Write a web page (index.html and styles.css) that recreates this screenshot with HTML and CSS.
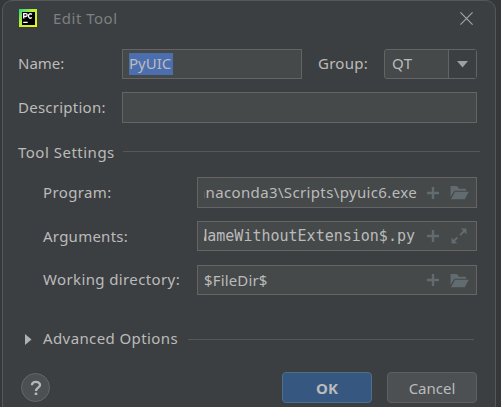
FILE: index.html
```
<!DOCTYPE html>
<html lang="en">
<head>
<meta charset="utf-8">
<title>Edit Tool</title>
<link rel="stylesheet" href="styles.css">
</head>
<body>
<svg class="defs" width="0" height="0">
  <symbol id="plus" viewBox="0 0 14 14"><path d="M5.8 1h2.4v4.8H13v2.4H8.2V13H5.8V8.2H1V5.8h4.8z"/></symbol>
  <symbol id="folder" viewBox="0 0 19 15"><path d="M0.5 1h6.5l2 2.7h7v2.1H4.3L0.5 12z"/><path d="M5 6.8h13.8l-4.1 7.4H0.9z"/></symbol>
  <symbol id="expand" viewBox="0 0 16 16"><path d="M9.7 0.5h5.8v5.8l-2.1-2.1-3.6 3.6-1.4-1.4L12 2.8zM6.3 15.5H.5V9.7l2.1 2.1 3-3L7 10.2l-3 3z"/></symbol>
</svg>
<main class="dialog">
  <header class="titlebar">
    <svg class="logo" viewBox="0 0 18 18">
      <defs><linearGradient id="g" x1="0" y1="0" x2="1" y2="1"><stop offset="0" stop-color="#21d789"/><stop offset=".4" stop-color="#b4ee3c"/><stop offset="1" stop-color="#f4f01c"/></linearGradient></defs>
      <path fill="url(#g)" d="M0 0h18v18H0z"/><path d="M3 3h13v13H3z"/>
      <path fill="none" stroke="#fff" stroke-width="1.3" d="M4.7 9.5V4.7h2.1c1.9 0 1.9 2.8 0 2.8H5M12.9 5.4c-1.4-1.3-3.4-.4-3.4 1.6s2 2.9 3.4 1.6M4.2 13.4h4.5"/>
    </svg>
    <h1 class="title">Edit Tool</h1>
    <svg class="close" viewBox="0 0 12 12"><path d="M.4.4l11.2 11.2M11.6.4L.4 11.6"/></svg>
  </header>
  <section class="general">
    <label class="label">Name:</label>
    <div class="name-row">
      <div class="field name"><span class="selected">PyUIC</span></div>
      <label class="label group">Group:</label>
      <div class="combo"><span class="combo-text">QT</span><span class="arrow"><svg viewBox="0 0 11 7"><path d="M0 0h11L5.5 6.5z"/></svg></span></div>
    </div>
    <label class="label desc">Description:</label>
    <div class="field tall"></div>
  </section>
  <div class="heading tool"><span class="tool-text">Tool Settings</span><i class="rule"></i></div>
  <section class="settings">
    <label class="label wide">Program:</label>
    <div class="field tall"><div class="clip"><span class="program">anaconda3\Scripts\pyuic6.exe</span></div><svg class="plus"><use href="#plus"/></svg><svg class="folder"><use href="#folder"/></svg></div>
    <label class="label desc">Arguments:</label>
    <div class="field"><div class="clip"><span class="args">NameWithoutExtension$.py</span></div><svg class="plus"><use href="#plus"/></svg><svg class="expand"><use href="#expand"/></svg></div>
    <label class="label wide">Working directory:</label>
    <div class="field"><div class="clip start"><span class="dir">$FileDir$</span></div><svg class="plus"><use href="#plus"/></svg><svg class="folder"><use href="#folder"/></svg></div>
  </section>
  <div class="heading advanced"><svg class="disclosure" viewBox="0 0 7 11"><path d="M0 0l6.5 5.5L0 11z"/></svg><span class="advanced-text">Advanced Options</span><i class="rule"></i></div>
  <footer class="footer">
    <button class="help"><svg viewBox="0 0 12 16"><path fill="none" stroke="#b5b8ba" stroke-width="2.4" d="M2 5.2C2 .8 10 .8 10 5 10 7.7 6 7.7 6 11"/><path fill="#b5b8ba" d="M4.7 12.6h2.6V15H4.7z"/></svg></button>
    <button class="button ok">OK</button>
    <button class="button cancel">Cancel</button>
  </footer>
</main>
</body>
</html>
```
FILE: styles.css
```
* { box-sizing: border-box; }
body {
  margin: 0;
  height: 407px;
  overflow: hidden;
  background: #35383a;
  color: #bbbbbb;
  font: 15px/20px "Noto Sans", sans-serif;
}
svg { display: block; flex: none; }
.defs { position: absolute; }
.dialog {
  width: 494px;
  height: 410px;
  margin-left: 2px;
  border: 1px solid #55585a;
  border-radius: 10px 10px 0 0;
  background: #3c3f41;
  white-space: nowrap;
}
.titlebar { display: flex; align-items: center; height: 34px; padding: 0 22px 0 16px; }
.logo { width: 18px; height: 18px; }
.title { margin: 0 auto 0 16px; color: #7d8082; font-size: 15px; font-weight: 400; letter-spacing: 0.5px; }
.close { width: 13px; height: 13px; stroke: #a1a4a6; stroke-width: 1.1; }
.general {
  display: grid;
  grid-template-columns: 104px 355px;
  grid-template-rows: 30px 31px;
  row-gap: 13px;
  align-items: center;
  margin: 14px 0 0 15px;
}
.label { padding-bottom: 2px; }
.name-row { display: flex; align-items: center; }
.field {
  display: flex;
  align-items: center;
  align-self: start;
  height: 30px;
  border: 1px solid #646464;
  background: #45494a;
}
.tall { height: 31px; }
.name { width: 180px; padding-left: 6px; }
.selected { height: 22px; line-height: 21px; width: 44px; background: #4b6eaf; }
.group { margin: 0 auto 0 16px; letter-spacing: 0.25px; }
.desc { letter-spacing: 0.25px; }
.wide { letter-spacing: 0.38px; }
.combo {
  display: flex;
  width: 93px;
  height: 30px;
  border: 1px solid #646464;
  border-radius: 3px;
  background: #45494a;
}
.combo-text { flex: 1; padding-left: 7px; line-height: 27px; letter-spacing: 0.5px; }
.arrow {
  display: flex;
  align-items: center;
  justify-content: center;
  width: 28px;
  border-left: 1px solid #646464;
  background: #3c3f41;
  fill: #9da0a2;
}
.arrow svg { width: 11px; height: 7px; }
.heading { display: flex; align-items: center; height: 20px; }
.rule { flex: 1; height: 1px; background: #555859; }
.tool { margin: 20px 15px 0 15px; }
.tool-text { padding-bottom: 2px; letter-spacing: 0.5px; }
.tool .rule { margin: 0 0 3px 8px; }
.settings {
  display: grid;
  grid-template-columns: 154px 280px;
  grid-template-rows: 31px 31px 30px;
  row-gap: 13px;
  align-items: center;
  margin: 14px 0 0 40px;
}
.clip { display: flex; justify-content: flex-end; width: 213px; margin: 0 9px 0 6px; padding-bottom: 1px; overflow: hidden; }
.clip.start { justify-content: flex-start; }
.program { letter-spacing: 0.36px; }
.args { margin-right: 2px; font: 15px/20px "DejaVu Sans Mono", monospace; }
.dir { letter-spacing: 0.15px; }
.plus { width: 14px; height: 14px; margin-right: 10px; }
.folder { width: 19px; height: 15px; }
.expand { width: 16px; height: 16px; margin-left: 1px; }
.field svg { fill: #616b70; }
.advanced { margin: 34px 21px 0 22px; }
.advanced-text { padding-bottom: 2px; letter-spacing: 0.4px; }
.disclosure { width: 7px; height: 11px; margin-right: 11px; fill: #afb1b3; }
.advanced .rule { margin: 1px 0 0 10px; }
.footer { display: flex; align-items: center; margin: 23px 0 0 18px; }
button { padding: 0; font: inherit; color: inherit; }
.help {
  display: flex;
  align-items: center;
  justify-content: center;
  width: 29px;
  height: 29px;
  margin-right: auto;
  border: 1px solid #65686a;
  border-radius: 50%;
  background: #4c5052;
}
.help svg { width: 12px; height: 16px; }
.button { width: 90px; height: 31px; border: 1px solid #5e6060; border-radius: 4px; background: #4c5052; }
.ok { margin-right: 15px; border-color: #4c708c; background: #365880; font-weight: 700; }
.cancel { margin-right: 18px; }
```
